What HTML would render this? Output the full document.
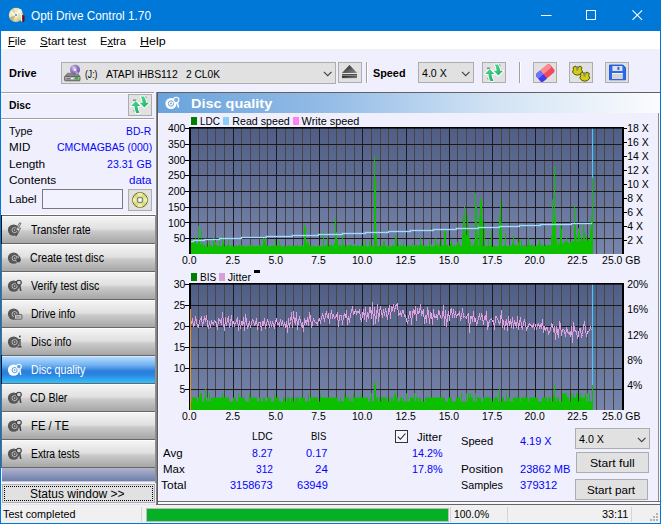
<!DOCTYPE html><html><head><meta charset="utf-8"><title>Opti Drive Control 1.70</title><style>
*{box-sizing:border-box;margin:0;padding:0}
html,body{width:661px;height:524px;overflow:hidden;background:#EFEFFE}
body{position:relative;font-family:"Liberation Sans",sans-serif;font-size:12px;color:#000}
.a{position:absolute;white-space:nowrap}
.t{position:absolute;white-space:pre;transform-origin:0 0}
.nav{position:absolute;left:2px;width:153px;height:27px;background:linear-gradient(#f4f4f4 0%,#e0e0e0 46%,#cbcbcb 54%,#a6a6a6 100%);border-top:1px solid #fcfcfc}
.nav.sel{background:linear-gradient(#b4daff 0%,#74b4f2 30%,#2c7edc 54%,#2a84e0 68%,#36c0fa 100%);border-top-color:#d4ecff}
.tb{position:absolute;background:#e1e1e1;border:1px solid #adadad}
u{text-decoration:underline}
</style></head><body>
<div class="a" style="left:0;top:0;width:661px;height:31px;background:#0078d7"></div>
<span class="t" style="left:30.5px;top:9.8px;font-size:12px;line-height:12px;transform:scaleX(0.983);color:#fff">Opti Drive Control 1.70</span>
<svg class="a" style="left:8px;top:6px" width="18" height="18" viewBox="0 0 18 18"><defs><radialGradient id="dg" cx=".35" cy=".35" r=".8"><stop offset="0" stop-color="#fbf6dc"/><stop offset=".6" stop-color="#e6dca8"/><stop offset="1" stop-color="#b4a468"/></radialGradient></defs><circle cx="8" cy="9" r="7.2" fill="url(#dg)"/><path d="M8 9L1.300 11.600A7.200 7.200 0 0 0 4.600 15.300Z" fill="#a89450" opacity=".55"/><path d="M8 9L10.500 2.300A7.200 7.200 0 0 1 14.300 5.500Z" fill="#fffbe8" opacity=".7"/><path d="M8 9L3 3.800A7.200 7.200 0 0 1 6 2.100Z" fill="#c8b878" opacity=".5"/><circle cx="8" cy="9" r="1.7" fill="#fff"/><circle cx="8" cy="9" r=".9" fill="#2a78d0"/><path d="M14.2 9v7h1.6l.7-1.5V9.5z" fill="#6e0e0e"/><path d="M12.6 3.2l1 12.3" stroke="#f4f4f4" stroke-width="1.3"/></svg>
<svg class="a" style="left:530px;top:0" width="131" height="31" viewBox="0 0 131 31"><path d="M11 15.5h10.5" stroke="#fff" stroke-width="1"/><rect x="56.5" y="10.5" width="9" height="9" fill="none" stroke="#fff"/><path d="M102.5 10.3l9.6 9.6M112.1 10.3l-9.6 9.6" stroke="#fff" stroke-width="1.1"/></svg>
<div class="a" style="left:1px;top:31px;width:659px;height:18px;background:#fff"></div>
<div class="a" style="left:1px;top:49px;width:659px;height:1px;background:#f2f2f2"></div>
<span class="t" style="left:8.1px;top:35.9px;font-size:11.4px;line-height:11.4px;transform:scaleX(0.986)"><u>F</u>ile</span>
<span class="t" style="left:39.9px;top:35.9px;font-size:11.4px;line-height:11.4px;transform:scaleX(1.013)"><u>S</u>tart test</span>
<span class="t" style="left:100.1px;top:35.9px;font-size:11.4px;line-height:11.4px;transform:scaleX(0.978)">E<u>x</u>tra</span>
<span class="t" style="left:139.8px;top:35.9px;font-size:11.4px;line-height:11.4px;transform:scaleX(1.097)"><u>H</u>elp</span>
<div class="a" style="left:0;top:31px;width:1px;height:493px;background:#0078d7"></div>
<div class="a" style="left:660px;top:31px;width:1px;height:493px;background:#0078d7"></div>
<div class="a" style="left:0;top:523px;width:661px;height:1px;background:#0078d7"></div>
<span class="t" style="left:8.7px;top:67.9px;font-size:11.4px;line-height:11.4px;transform:scaleX(0.965);font-weight:bold">Drive</span>
<div class="tb" style="left:61px;top:62px;width:275px;height:22px"></div>
<span class="t" style="left:84.5px;top:68.8px;font-size:11.4px;line-height:11.4px;transform:scaleX(0.754)">(J:)</span>
<span class="t" style="left:105.8px;top:68.8px;font-size:11.4px;line-height:11.4px;transform:scaleX(0.913)">ATAPI iHBS112</span>
<span class="t" style="left:185.7px;top:68.8px;font-size:11.4px;line-height:11.4px;transform:scaleX(0.895)">2 CL0K</span>
<svg class="a" style="left:322.5px;top:70.5px" width="10" height="7" viewBox="0 0 10 7"><path d="M0.9 0.8l3.8 3.9L8.5 0.8" fill="none" stroke="#404040" stroke-width="1.1"/></svg>
<svg class="a" style="left:63px;top:63px" width="19" height="20" viewBox="63 63 19 20"><defs><radialGradient id="pd" cx=".4" cy=".35" r=".7"><stop offset="0" stop-color="#d8ccf0"/><stop offset=".5" stop-color="#9478c4"/><stop offset="1" stop-color="#6c509c"/></radialGradient><linearGradient id="dv" x1="0" y1="0" x2="0" y2="1"><stop offset="0" stop-color="#c4c4c4"/><stop offset="1" stop-color="#8c8c8c"/></linearGradient></defs><path d="M64.6 76.6L67.5 73.2H77.5L80 76.6Z" fill="#8a8a8a" stroke="#5a5a5a" stroke-width=".6"/><circle cx="75" cy="69.8" r="5" fill="url(#pd)"/><path d="M75 69.8L71.2 66.6A5 5 0 0 1 74 64.9ZM75 69.8L78.8 73A5 5 0 0 1 76 74.7Z" fill="#c8b8e8" opacity=".7"/><circle cx="75" cy="69.8" r="1.3" fill="#f4f0fa"/><rect x="64.6" y="76.4" width="15.4" height="4.4" rx=".8" fill="url(#dv)" stroke="#4e4e4e" stroke-width=".8"/><rect x="70.8" y="78" width="2.6" height="1.2" fill="#fff"/><rect x="66.5" y="78" width="4" height="1.2" fill="#777"/><circle cx="76.6" cy="77.9" r="1.5" fill="#18c018"/></svg>
<div class="tb" style="left:338px;top:62px;width:24px;height:21px"></div>
<svg class="a" style="left:341px;top:64px" width="18" height="16" viewBox="341 64 18 16"><defs><linearGradient id="ej" x1="0" y1="0" x2="1" y2="1"><stop offset="0" stop-color="#1e1e1e"/><stop offset="1" stop-color="#8c8c8c"/></linearGradient></defs><path d="M349.5 65L357.200 73H341.900Z" fill="url(#ej)"/><rect x="342" y="74.200" width="15" height="1.300" fill="#2c2c2c"/><rect x="342" y="76" width="15" height="2.200" fill="url(#ej)"/></svg>
<div class="a" style="left:366px;top:62px;width:1px;height:21px;background:#a0a0a0"></div>
<div class="a" style="left:367px;top:62px;width:1px;height:21px;background:#fff"></div>
<span class="t" style="left:372.5px;top:67.9px;font-size:11.4px;line-height:11.4px;transform:scaleX(0.951);font-weight:bold">Speed</span>
<div class="tb" style="left:418px;top:62px;width:56px;height:21px"></div>
<span class="t" style="left:422.0px;top:67.9px;font-size:11.4px;line-height:11.4px;transform:scaleX(0.928)">4.0 X</span>
<svg class="a" style="left:460.5px;top:70.5px" width="10" height="7" viewBox="0 0 10 7"><path d="M0.9 0.8l3.8 3.9L8.5 0.8" fill="none" stroke="#404040" stroke-width="1.1"/></svg>
<div class="tb" style="left:482px;top:62px;width:24px;height:21px"></div>
<svg class="a" style="left:482px;top:62px" width="24" height="22" viewBox="0 0 24 22"><g transform="translate(12 10.800) scale(1.08) translate(-12 -10.800)"><g stroke="#fff" stroke-width="1.6" stroke-linejoin="round" fill="#fff"><path d="M8 7.2L12.3 12H9.6Q10 16 11.6 18.2L8.6 18.6Q6.8 15 6.8 12H3.7Z"/><path d="M16 13.4L11.7 9H14.5Q14.2 5.5 12.7 3.2L15.8 3Q17.5 6 17.6 9H20.4Z"/></g><defs><linearGradient id="ag" x1="0" y1="0" x2="1" y2="1"><stop offset="0" stop-color="#4cdc94"/><stop offset="1" stop-color="#1cac60"/></linearGradient></defs><path d="M8 7.2L12.3 12H9.6Q10 16 11.6 18.2L8.6 18.6Q6.8 15 6.8 12H3.7Z" fill="url(#ag)"/><path d="M16 13.4L11.7 9H14.5Q14.2 5.5 12.7 3.2L15.8 3Q17.5 6 17.6 9H20.4Z" fill="url(#ag)"/><path d="M5.5 6.5h3" stroke="#444" stroke-width=".8"/><path d="M17.3 3.2l.8 2M6 16l.8 1.6" stroke="#444" stroke-width=".7" stroke-dasharray="1 1"/></g></svg>
<div class="a" style="left:519px;top:62px;width:1px;height:21px;background:#a0a0a0"></div>
<div class="a" style="left:520px;top:62px;width:1px;height:21px;background:#fff"></div>
<div class="tb" style="left:533px;top:62px;width:24px;height:21px"></div>
<svg class="a" style="left:533px;top:62px" width="24" height="21" viewBox="533 62 24 21"><g transform="rotate(-40 545.3 73)"><rect x="536.3" y="67.8" width="18" height="10.4" rx="2.4" fill="#ec4c5c"/><rect x="536.3" y="67.8" width="18" height="5" rx="2.4" fill="#ff8a92"/><path d="M538.7 67.8h4.4v10.4h-4.4a2.400 2.400 0 0 1-2.400-2.400v-5.600a2.400 2.400 0 0 1 2.400-2.400z" fill="#3a3af0"/><path d="M538.7 67.8h4.4v5h-6.800v-2.600a2.400 2.400 0 0 1 2.400-2.400z" fill="#6a76ff"/></g></svg>
<div class="tb" style="left:569px;top:62px;width:24px;height:21px"></div>
<svg class="a" style="left:569px;top:62px" width="24" height="21" viewBox="569 62 24 21"><g stroke="#55540a" stroke-width="1"><path d="M573 67.5l2.5-1.5 1 1.8h2l1-1.8 2.5 1.5-.6 2.2 1.2 2.3-2.2 2.4-2.9.8-3-.8-2-2.4 1-2.3z" fill="#d2ce12"/><path d="M580.3 73.5l2.5-1.5 1 1.8h2l1-1.8 2.5 1.5-.6 2.2 1.2 2.3-2.2 2.4-2.9.8-3-.8-2-2.4 1-2.3z" fill="#d2ce12"/></g><rect x="576.2" y="66" width="2" height="4.6" fill="#8c8c74"/><rect x="583.5" y="72" width="2" height="4.6" fill="#8c8c74"/></svg>
<div class="tb" style="left:605px;top:62px;width:24px;height:21px"></div>
<svg class="a" style="left:605px;top:62px" width="24" height="21" viewBox="605 62 24 21"><path d="M609.5 65h13.4l2.6 2.4v12.4h-16z" fill="#2a6af0" stroke="#1a4cc8" stroke-width=".8"/><rect x="612.4" y="66" width="10" height="5" fill="#e2e2e6"/><rect x="617.4" y="66.8" width="2" height="3.2" fill="#2a6af0"/><rect x="612" y="73" width="10.8" height="6" fill="#d4d4d4"/><rect x="612" y="73" width="10.8" height="1" fill="#f4f4f4"/></svg>
<div class="a" style="left:1px;top:92px;width:153px;height:1px;background:#a0a0a0"></div>
<div class="a" style="left:1px;top:93px;width:153px;height:1px;background:#fff"></div>
<span class="t" style="left:8.7px;top:100.1px;font-size:11.4px;line-height:11.4px;transform:scaleX(0.906);font-weight:bold">Disc</span>
<div class="tb" style="left:128px;top:94px;width:24px;height:22px"></div>
<svg class="a" style="left:128px;top:94px" width="24" height="22" viewBox="0 0 24 22"><g transform="translate(12 10.800) scale(1.08) translate(-12 -10.800)"><g stroke="#fff" stroke-width="1.6" stroke-linejoin="round" fill="#fff"><path d="M8 7.2L12.3 12H9.6Q10 16 11.6 18.2L8.6 18.6Q6.8 15 6.8 12H3.7Z"/><path d="M16 13.4L11.7 9H14.5Q14.2 5.5 12.7 3.2L15.8 3Q17.5 6 17.6 9H20.4Z"/></g><defs><linearGradient id="ag2" x1="0" y1="0" x2="1" y2="1"><stop offset="0" stop-color="#4cdc94"/><stop offset="1" stop-color="#1cac60"/></linearGradient></defs><path d="M8 7.2L12.3 12H9.6Q10 16 11.6 18.2L8.6 18.6Q6.8 15 6.8 12H3.7Z" fill="url(#ag2)"/><path d="M16 13.4L11.7 9H14.5Q14.2 5.5 12.7 3.2L15.8 3Q17.5 6 17.6 9H20.4Z" fill="url(#ag2)"/><path d="M5.5 6.5h3" stroke="#444" stroke-width=".8"/><path d="M17.3 3.2l.8 2M6 16l.8 1.6" stroke="#444" stroke-width=".7" stroke-dasharray="1 1"/></g></svg>
<div class="a" style="left:1px;top:118px;width:153px;height:1px;background:#a0a0a0"></div>
<div class="a" style="left:1px;top:119px;width:153px;height:1px;background:#fff"></div>
<span class="t" style="left:8.7px;top:125.9px;font-size:11.4px;line-height:11.4px;transform:scaleX(0.951)">Type</span>
<span class="t" style="left:126.3px;top:125.9px;font-size:11.4px;line-height:11.4px;transform:scaleX(0.905);color:#0404f8">BD-R</span>
<span class="t" style="left:8.7px;top:142.1px;font-size:11.4px;line-height:11.4px;transform:scaleX(1.020)">MID</span>
<span class="t" style="left:56.9px;top:142.1px;font-size:11.4px;line-height:11.4px;transform:scaleX(0.922);color:#0404f8">CMCMAGBA5 (000)</span>
<span class="t" style="left:8.7px;top:158.9px;font-size:11.4px;line-height:11.4px;transform:scaleX(1.039)">Length</span>
<span class="t" style="left:106.8px;top:158.9px;font-size:11.4px;line-height:11.4px;transform:scaleX(0.929);color:#0404f8">23.31 GB</span>
<span class="t" style="left:8.7px;top:175.1px;font-size:11.4px;line-height:11.4px;transform:scaleX(1.035)">Contents</span>
<span class="t" style="left:128.5px;top:175.1px;font-size:11.4px;line-height:11.4px;transform:scaleX(1.015);color:#0404f8">data</span>
<span class="t" style="left:8.7px;top:193.9px;font-size:11.4px;line-height:11.4px;transform:scaleX(0.987)">Label</span>
<div class="a" style="left:42px;top:189px;width:81px;height:20px;background:#f2f2ff;border:1px solid #7a7a7a"></div>
<div class="tb" style="left:128px;top:189px;width:24px;height:22px"></div>
<svg class="a" style="left:131px;top:191px" width="18" height="18" viewBox="-9 -9 18 18"><circle r="7.5" fill="#dede78" stroke="#56561e" stroke-width=".9"/><g fill="#f6f6c0" opacity=".75"><path d="M0 0L-2.600 -7A7.500 7.500 0 0 1 2.600 -7Z"/><path d="M0 0L2.600 7A7.500 7.500 0 0 1 -2.600 7Z"/><path d="M0 0L-7 2.600A7.500 7.500 0 0 1 -7 -2.600Z"/><path d="M0 0L7 -2.600A7.500 7.500 0 0 1 7 2.600Z"/></g><circle r="2.900" fill="#d6e4c6" stroke="#5c6474" stroke-width=".9"/><circle r="1.200" fill="#fff"/></svg>
<div class="a" style="left:1px;top:214px;width:155px;height:1px;background:#fff"></div>
<div class="a" style="left:1px;top:215px;width:155px;height:253px;background:#686868"></div>
<div class="nav" style="top:216px">
<svg style="position:absolute;left:0;top:-1px" width="28" height="28" viewBox="2 0 28 28"><circle cx="13.6" cy="14.1" r="5.7" fill="#585858"/><circle cx="14.6" cy="14.1" r="2.6" fill="none" stroke="#c4c4c4" stroke-width=".9"/><circle cx="14.6" cy="14.1" r=".8" fill="#c4c4c4"/><path d="M19.4 7l-3.6 7.2h2.2l-2 6 4.6-8h-2.2l2.6-5.2z" fill="#e8e8e8" stroke="#444" stroke-width=".7"/></svg>
</div>
<span class="t" style="left:31.1px;top:223.8px;font-size:12px;line-height:12px;transform:scaleX(0.875)">Transfer rate</span>
<div class="nav" style="top:244px">
<svg style="position:absolute;left:0;top:-1px" width="28" height="28" viewBox="2 0 28 28"><circle cx="13.6" cy="14.1" r="5.7" fill="#585858"/><circle cx="14.6" cy="14.1" r="2.6" fill="none" stroke="#c4c4c4" stroke-width=".9"/><circle cx="14.6" cy="14.1" r=".8" fill="#c4c4c4"/><path d="M18.5 10.5c2 2.5 2.6 4 2.6 5.5a2.7 2.7 0 0 1-5.4 0c0-1.5 1.2-2 1.6-3.4.6.6.8 1.2.8 1.8.6-1.2.8-2.4.4-3.900z" fill="#4a4a4a" stroke="#ddd" stroke-width=".5"/></svg>
</div>
<span class="t" style="left:30.0px;top:251.8px;font-size:12px;line-height:12px;transform:scaleX(0.888)">Create test disc</span>
<div class="nav" style="top:272px">
<svg style="position:absolute;left:0;top:-1px" width="28" height="28" viewBox="2 0 28 28"><circle cx="13.6" cy="14.1" r="5.7" fill="#585858"/><circle cx="14.6" cy="14.1" r="2.6" fill="none" stroke="#c4c4c4" stroke-width=".9"/><circle cx="14.6" cy="14.1" r=".8" fill="#c4c4c4"/><circle cx="18.9" cy="10.6" r="2.4" fill="#d4d4d4" stroke="#3e3e3e" stroke-width="1.1"/><path d="M19.7 13.2l1 5.6" stroke="#3e3e3e" stroke-width="1.5"/></svg>
</div>
<span class="t" style="left:30.5px;top:279.8px;font-size:12px;line-height:12px;transform:scaleX(0.883)">Verify test disc</span>
<div class="nav" style="top:300px">
<svg style="position:absolute;left:0;top:-1px" width="28" height="28" viewBox="2 0 28 28"><circle cx="13.6" cy="14.1" r="5.7" fill="#585858"/><circle cx="14.6" cy="14.1" r="2.6" fill="none" stroke="#c4c4c4" stroke-width=".9"/><circle cx="14.6" cy="14.1" r=".8" fill="#c4c4c4"/><rect x="14.5" y="14.6" width="7.4" height="4.6" rx=".8" fill="#c8c8c8" stroke="#4a4a4a" stroke-width=".8"/><path d="M16 17h4" stroke="#666" stroke-width=".8"/></svg>
</div>
<span class="t" style="left:30.9px;top:307.8px;font-size:12px;line-height:12px;transform:scaleX(0.876)">Drive info</span>
<div class="nav" style="top:328px">
<svg style="position:absolute;left:0;top:-1px" width="28" height="28" viewBox="2 0 28 28"><circle cx="13.6" cy="14.1" r="5.7" fill="#585858"/><circle cx="14.6" cy="14.1" r="2.6" fill="none" stroke="#c4c4c4" stroke-width=".9"/><circle cx="14.6" cy="14.1" r=".8" fill="#c4c4c4"/><path d="M18.2 11.6h1.8v7M17.6 18.8h4" stroke="#444" stroke-width="1.3" fill="none"/><rect x="19" y="7.6" width="1.6" height="1.8" fill="#444"/></svg>
</div>
<span class="t" style="left:30.9px;top:335.8px;font-size:12px;line-height:12px;transform:scaleX(0.878)">Disc info</span>
<div class="nav sel" style="top:356px">
<svg style="position:absolute;left:0;top:-1px" width="28" height="28" viewBox="2 0 28 28"><circle cx="13.6" cy="14.1" r="5.7" fill="#fff"/><circle cx="14.6" cy="14.1" r="2.6" fill="none" stroke="#3c8ce4" stroke-width=".9"/><circle cx="14.6" cy="14.1" r=".8" fill="#3c8ce4"/><circle cx="18.9" cy="10.6" r="2.4" fill="#5aa4ec" stroke="#fff" stroke-width="1.1"/><path d="M19.7 13.2l1 5.6" stroke="#fff" stroke-width="1.5"/></svg>
</div>
<span class="t" style="left:30.8px;top:363.8px;font-size:12px;line-height:12px;transform:scaleX(0.885);color:#fff">Disc quality</span>
<div class="nav" style="top:384px">
<svg style="position:absolute;left:0;top:-1px" width="28" height="28" viewBox="2 0 28 28"><circle cx="13.6" cy="14.1" r="5.7" fill="#585858"/><circle cx="14.6" cy="14.1" r="2.6" fill="none" stroke="#c4c4c4" stroke-width=".9"/><circle cx="14.6" cy="14.1" r=".8" fill="#c4c4c4"/><circle cx="18.9" cy="10.6" r="2.4" fill="#d4d4d4" stroke="#3e3e3e" stroke-width="1.1"/><path d="M19.7 13.2l1 5.6" stroke="#3e3e3e" stroke-width="1.5"/></svg>
</div>
<span class="t" style="left:29.9px;top:391.8px;font-size:12px;line-height:12px;transform:scaleX(0.890)">CD Bler</span>
<div class="nav" style="top:412px">
<svg style="position:absolute;left:0;top:-1px" width="28" height="28" viewBox="2 0 28 28"><circle cx="13.6" cy="14.1" r="5.7" fill="#585858"/><circle cx="14.6" cy="14.1" r="2.6" fill="none" stroke="#c4c4c4" stroke-width=".9"/><circle cx="14.6" cy="14.1" r=".8" fill="#c4c4c4"/><circle cx="18.9" cy="10.6" r="2.4" fill="#d4d4d4" stroke="#3e3e3e" stroke-width="1.1"/><path d="M19.7 13.2l1 5.6" stroke="#3e3e3e" stroke-width="1.5"/></svg>
</div>
<span class="t" style="left:30.8px;top:419.8px;font-size:12px;line-height:12px;transform:scaleX(0.939)">FE / TE</span>
<div class="nav" style="top:440px">
<svg style="position:absolute;left:0;top:-1px" width="28" height="28" viewBox="2 0 28 28"><circle cx="13.6" cy="14.1" r="5.7" fill="#585858"/><circle cx="14.6" cy="14.1" r="2.6" fill="none" stroke="#c4c4c4" stroke-width=".9"/><circle cx="14.6" cy="14.1" r=".8" fill="#c4c4c4"/><circle cx="18.9" cy="10.6" r="2.4" fill="#d4d4d4" stroke="#3e3e3e" stroke-width="1.1"/><path d="M19.7 13.2l1 5.6" stroke="#3e3e3e" stroke-width="1.5"/></svg>
</div>
<span class="t" style="left:30.8px;top:447.8px;font-size:12px;line-height:12px;transform:scaleX(0.859)">Extra tests</span>
<div class="a" style="left:1px;top:215px;width:1px;height:29px;background:#111"></div>
<div class="a" style="left:1px;top:355px;width:1px;height:29px;background:#111"></div>
<div class="a" style="left:2px;top:468px;width:153px;height:13px;background:linear-gradient(#b0b4cc,#6e7eae)"></div>
<div class="a" style="left:2px;top:481px;width:153px;height:1px;background:#c8c8d2"></div>
<div class="a" style="left:155px;top:215px;width:1px;height:268px;background:#909090"></div>
<div class="a" style="left:2px;top:484px;width:153px;height:19px;background:#e1e1e1;border:1px solid #adadad"></div>
<div class="a" style="left:4px;top:486px;width:149px;height:15px;border:1px dotted #000"></div>
<span class="t" style="left:30.0px;top:487.8px;font-size:12px;line-height:12px;transform:scaleX(0.998)">Status window &gt;&gt;</span>
<div class="a" style="left:1px;top:504px;width:155px;height:1px;background:#e4e4e8"></div>
<div class="a" style="left:1px;top:505px;width:659px;height:18px;background:#f0f0f0"></div>
<span class="t" style="left:3.3px;top:509.0px;font-size:11.2px;line-height:11.2px;transform:scaleX(0.962)">Test completed</span>
<div class="a" style="left:141px;top:507px;width:1px;height:15px;background:#d4d4d4"></div>
<div class="a" style="left:146px;top:508px;width:303px;height:14px;background:#e6e6e6;border:1px solid #bcbcbc"></div>
<div class="a" style="left:147px;top:509px;width:301px;height:12px;background:#06b025"></div>
<div class="a" style="left:450px;top:507px;width:1px;height:15px;background:#d4d4d4"></div>
<span class="t" style="left:454.1px;top:509.0px;font-size:11.2px;line-height:11.2px;transform:scaleX(0.925)">100.0%</span>
<div class="a" style="left:507px;top:507px;width:1px;height:15px;background:#d4d4d4"></div>
<span class="t" style="left:601.9px;top:509.0px;font-size:11.2px;line-height:11.2px;transform:scaleX(0.972)">33:11</span>
<div class="a" style="left:631px;top:507px;width:1px;height:15px;background:#d4d4d4"></div>
<svg class="a" style="left:650px;top:513px" width="8" height="8" viewBox="0 0 8 8" fill="#b4b4b4"><rect x="6" y="0" width="2" height="2"/><rect x="3" y="3" width="2" height="2"/><rect x="6" y="3" width="2" height="2"/><rect x="0" y="6" width="2" height="2"/><rect x="3" y="6" width="2" height="2"/><rect x="6" y="6" width="2" height="2"/></svg>
<div class="a" style="left:156px;top:92px;width:504px;height:1px;background:#626262"></div>
<div class="a" style="left:156px;top:92px;width:1px;height:413px;background:#848484"></div>
<div class="a" style="left:157px;top:92px;width:1px;height:413px;background:#5c5c5c"></div>
<div class="a" style="left:158px;top:93px;width:501px;height:20px;background:linear-gradient(90deg,#69a3dc 0%,#94bce6 34%,#d0e2f4 66%,#fbfcfe 100%)"></div>
<div class="a" style="left:659px;top:93px;width:1px;height:411px;background:#f8f8ff"></div>
<div class="a" style="left:658px;top:113px;width:1px;height:389px;background:#8c8c8c"></div>
<svg class="a" style="left:162px;top:93px" width="24" height="20" viewBox="0 0 24 20"><circle cx="9" cy="10.5" r="5.6" fill="#fff"/><circle cx="9" cy="10.5" r="2.7" fill="none" stroke="#6aa2da" stroke-width="1"/><circle cx="9" cy="10.5" r=".9" fill="#6aa2da"/><circle cx="14.2" cy="7" r="2.7" fill="#7eb0e2" stroke="#fff" stroke-width="1.1"/><path d="M15.3 9.6l1.2 5" stroke="#fff" stroke-width="1.5"/></svg>
<div class="a" style="left:158px;top:501px;width:502px;height:1px;background:#6e6e6e"></div>
<div class="a" style="left:158px;top:502px;width:502px;height:2px;background:#f8f8ff"></div>
<div class="a" style="left:158px;top:113px;width:1px;height:388px;background:#f8f8ff"></div>
<div class="a" style="left:156px;top:504px;width:504px;height:1px;background:#666"></div>
<svg class="a" style="left:0;top:0" width="661" height="524" viewBox="0 0 661 524" font-family="Liberation Sans, sans-serif" font-size="11">
<defs><linearGradient id="pg" x1="0" y1="0" x2="0" y2="1"><stop offset="0" stop-color="#505e86"/><stop offset="1" stop-color="#7886ae"/></linearGradient></defs>
<rect x="190" y="128" width="433" height="126" fill="url(#pg)"/>
<rect x="198" y="128" width="1" height="126" fill="#484644"/>
<rect x="207" y="128" width="1" height="126" fill="#484644"/>
<rect x="215" y="128" width="1" height="126" fill="#484644"/>
<rect x="224" y="128" width="1" height="126" fill="#484644"/>
<rect x="233" y="128" width="1" height="126" fill="#1c1c1c"/>
<rect x="241" y="128" width="1" height="126" fill="#484644"/>
<rect x="250" y="128" width="1" height="126" fill="#484644"/>
<rect x="259" y="128" width="1" height="126" fill="#484644"/>
<rect x="267" y="128" width="1" height="126" fill="#484644"/>
<rect x="276" y="128" width="1" height="126" fill="#1c1c1c"/>
<rect x="285" y="128" width="1" height="126" fill="#484644"/>
<rect x="293" y="128" width="1" height="126" fill="#484644"/>
<rect x="302" y="128" width="1" height="126" fill="#484644"/>
<rect x="310" y="128" width="1" height="126" fill="#484644"/>
<rect x="319" y="128" width="1" height="126" fill="#1c1c1c"/>
<rect x="328" y="128" width="1" height="126" fill="#484644"/>
<rect x="336" y="128" width="1" height="126" fill="#484644"/>
<rect x="345" y="128" width="1" height="126" fill="#484644"/>
<rect x="354" y="128" width="1" height="126" fill="#484644"/>
<rect x="362" y="128" width="1" height="126" fill="#1c1c1c"/>
<rect x="371" y="128" width="1" height="126" fill="#484644"/>
<rect x="380" y="128" width="1" height="126" fill="#484644"/>
<rect x="388" y="128" width="1" height="126" fill="#484644"/>
<rect x="397" y="128" width="1" height="126" fill="#484644"/>
<rect x="406" y="128" width="1" height="126" fill="#1c1c1c"/>
<rect x="414" y="128" width="1" height="126" fill="#484644"/>
<rect x="423" y="128" width="1" height="126" fill="#484644"/>
<rect x="431" y="128" width="1" height="126" fill="#484644"/>
<rect x="440" y="128" width="1" height="126" fill="#484644"/>
<rect x="449" y="128" width="1" height="126" fill="#1c1c1c"/>
<rect x="457" y="128" width="1" height="126" fill="#484644"/>
<rect x="466" y="128" width="1" height="126" fill="#484644"/>
<rect x="475" y="128" width="1" height="126" fill="#484644"/>
<rect x="483" y="128" width="1" height="126" fill="#484644"/>
<rect x="492" y="128" width="1" height="126" fill="#1c1c1c"/>
<rect x="501" y="128" width="1" height="126" fill="#484644"/>
<rect x="509" y="128" width="1" height="126" fill="#484644"/>
<rect x="518" y="128" width="1" height="126" fill="#484644"/>
<rect x="526" y="128" width="1" height="126" fill="#484644"/>
<rect x="535" y="128" width="1" height="126" fill="#1c1c1c"/>
<rect x="544" y="128" width="1" height="126" fill="#484644"/>
<rect x="552" y="128" width="1" height="126" fill="#484644"/>
<rect x="561" y="128" width="1" height="126" fill="#484644"/>
<rect x="570" y="128" width="1" height="126" fill="#484644"/>
<rect x="578" y="128" width="1" height="126" fill="#1c1c1c"/>
<rect x="587" y="128" width="1" height="126" fill="#484644"/>
<rect x="596" y="128" width="1" height="126" fill="#484644"/>
<rect x="604" y="128" width="1" height="126" fill="#484644"/>
<rect x="613" y="128" width="1" height="126" fill="#484644"/>
<rect x="190" y="144" width="432" height="1" fill="#1a1a1a"/>
<rect x="190" y="160" width="432" height="1" fill="#1a1a1a"/>
<rect x="190" y="175" width="432" height="1" fill="#1a1a1a"/>
<rect x="190" y="191" width="432" height="1" fill="#1a1a1a"/>
<rect x="190" y="207" width="432" height="1" fill="#1a1a1a"/>
<rect x="190" y="222" width="432" height="1" fill="#1a1a1a"/>
<rect x="190" y="238" width="432" height="1" fill="#1a1a1a"/>
<path d="M190 254V241.3h1V242.5h1V241.7h1V243.4h1V240.2h1V236.9h1V244.1h2V226h1V239.8h1V244.5h1V230.4h1V243.7h1V245.2h1V244.6h1V246.5h1V243.1h1V246.9h1V246.4h1V240.7h1V245h1V245.5h1V246.7h1V236.7h1V243.7h1V241.8h1V244.3h1V245.9h1V246.7h1V237h1V246.6h1V246.1h1V236h1V242.2h1V246.6h1V245.9h1V246h1V244.6h1V238.9h1V245.5h1V246.7h1V244.9h1V246.3h1V246.5h1V245.9h1V246.1h1V245.3h1V246.6h1V245.4h1V244.8h1V246.1h1V245.1h1V244.6h1V246.1h1V246.5h1V246.6h1V246.5h1V245.9h1V246.6h1V244.5h1V244.7h1V246h1V244.2h1V246.4h1V246.1h1V246.5h1V246h2V245.8h1V245.1h1V244.3h1V246.5h1V245.2h1V238.2h1V241.2h1V237h1V245.3h1V245.7h1V245.9h1V246.2h1V246h1V245.9h1V245.4h1V246.1h1V246.4h1V239.8h1V245.5h2V245.7h1V241h1V245.3h1V246.5h1V246.3h1V245.5h1V246.7h1V246.6h2V246.1h1V244.6h1V245.9h1V246.4h1V245.6h1V246h2V245.9h1V245.8h1V246.1h1V244.1h1V245.9h1V246.5h1V245.8h2V245.3h1V246.6h1V225.3h1V227.2h1V243.5h1V240.8h1V242.3h1V246.1h1V245.7h1V245.6h1V246.5h1V246.1h1V245.5h1V246.7h1V246.6h1V245.7h1V245.4h1V245.5h1V246.4h1V246.5h1V245.9h1V231.6h1V245.7h1V245.8h1V245.6h1V238.2h1V246.4h1V244.8h1V246.2h1V244.5h1V244.9h1V246.3h1V243.1h1V217.8h1V231.9h1V239.9h1V246.3h1V244.8h1V245h1V246.6h1V235.1h1V244.8h1V245.9h1V246.6h1V244.7h1V246.5h1V245.2h1V245.3h1V245h1V244.4h1V246.3h1V245.5h1V243.9h1V246.2h1V246.3h1V245.4h1V245.5h1V246.2h1V246h1V243.3h1V245.8h1V244.6h1V246.2h1V239.9h1V246h1V246.7h1V246.3h1V240.8h1V245.8h2V245.6h1V246.5h1V155.7h1V180h1V235.1h1V245.7h1V246.3h1V246.1h1V246h1V246.2h1V246h1V241.2h1V240.9h1V245.9h1V246.6h1V246.2h1V246h1V246.7h1V246.2h1V246.6h1V245.1h1V246h1V245.4h1V235.1h1V238.2h1V246.2h1V243.8h1V246.6h1V244.9h1V246.3h1V245.6h1V241.8h1V246.4h1V246.2h2V246.3h1V244.4h1V246.5h1V245.8h1V245.6h1V243.6h1V246.7h1V245.2h1V245.8h1V244.8h1V245.4h1V246.6h1V244.9h1V236.7h1V243.9h1V245.8h1V245.6h1V246.3h1V245.9h1V245.7h1V246.5h1V246.2h1V240.7h1V246.7h1V244.6h1V246.4h2V245.5h1V238.2h1V245.2h1V242.6h1V246.7h1V243.2h1V246.1h1V239.1h1V245.6h1V246.1h1V229.4h1V230.4h1V244.9h1V244.8h1V246.7h1V245.7h1V243.6h1V239.5h1V245.6h1V246.2h1V244.2h1V246.4h1V244.7h1V242.2h1V242.4h1V243.5h1V246.2h1V245.7h1V235.1h1V216.2h1V206.8h1V231.9h1V235.1h1V214.6h1V225.7h1V238.2h1V241.4h1V246h1V244.4h1V245.6h1V241.6h1V193.2h1V205.2h1V235.1h1V246h1V216.2h1V197.6h1V200.4h1V219.3h1V246h1V225.7h1V245.8h1V246.1h1V245.5h1V239.7h1V245.7h1V245.6h1V230.7h1V246.7h1V246.3h1V245.9h1V246.3h1V246.6h1V246.2h1V246.4h1V216.2h1V201.1h1V222.5h1V246.4h1V245.9h1V244.6h1V232.9h1V246.1h1V246h1V246.3h1V245.4h1V246h1V245.5h1V242.5h1V235.7h1V244.1h1V245.6h1V245.5h1V245.6h1V242.2h1V239.2h1V246.2h1V239.8h1V244.8h1V246.4h1V245h1V246.3h2V244.8h1V238.2h1V245h1V245.3h1V244.4h1V244.7h1V246.1h1V245.8h1V246h1V245.8h2V243.3h1V238.9h1V242.9h1V245.5h1V244.6h1V245.9h2V244.3h1V245.7h1V245.1h1V245.3h1V244.4h1V245.4h1V235.1h1V199.5h1V225.7h1V166.1h1V216.2h1V238.2h1V244.5h1V240.9h1V243.8h1V224.1h1V228.8h1V243.7h1V243.2h1V241.6h1V241.1h1V236.9h1V242h1V243.2h1V242.9h1V242.1h1V242.3h1V241.1h1V241.7h1V206.1h1V225.7h1V235.4h1V242h1V228.2h1V231.9h1V241.8h1V238.1h1V239h1V225h1V231.9h1V241.3h1V236h1V240.7h1V240.6h1V239.5h1V228.8h1V216.2h1V177.8h1V254Z" fill="#0cc000"/>
<path d="M191 241.5H193V240.5H204V239.5H219V238.5H241V237.5H266V236.5H292V235.5H318V234.5H342V233.5H365V232.5H388V231.5H410V230.5H433V229.5H456V228.5H478V227.5H499V226.5H519V225.5H540V224.5H571V223.5H592" fill="none" stroke="#a0dcff" stroke-width="1" shape-rendering="crispEdges"/>
<path d="M191 241.5H193V240.5H204V239.5H219V238.5H241V237.5H266V236.5H292V235.5H318V234.5H342V233.5H365V232.5H388V231.5H410V230.5H433V229.5H456V228.5H478V227.5H499V226.5H519V225.5H540V224.5H571V223.5H592" fill="none" stroke="#a0dcff" stroke-width="1.8" opacity=".35"/>
<rect x="592" y="128" width="1.1" height="50" fill="#40ccf4"/>
<rect x="189" y="127" width="2" height="127" fill="#000"/>
<rect x="189" y="127" width="434" height="1.6" fill="#000"/>
<rect x="622" y="127" width="2" height="127" fill="#000"/>
<text x="185.3" y="132.2" text-anchor="end" textLength="17.4" lengthAdjust="spacingAndGlyphs">400</text>
<rect x="185" y="128" width="5" height="1" fill="#000"/>
<text x="185.3" y="147.9" text-anchor="end" textLength="17.4" lengthAdjust="spacingAndGlyphs">350</text>
<rect x="185" y="144" width="5" height="1" fill="#000"/>
<text x="185.3" y="163.7" text-anchor="end" textLength="17.4" lengthAdjust="spacingAndGlyphs">300</text>
<rect x="185" y="160" width="5" height="1" fill="#000"/>
<text x="185.3" y="179.4" text-anchor="end" textLength="17.4" lengthAdjust="spacingAndGlyphs">250</text>
<rect x="185" y="175" width="5" height="1" fill="#000"/>
<text x="185.3" y="195.2" text-anchor="end" textLength="17.4" lengthAdjust="spacingAndGlyphs">200</text>
<rect x="185" y="191" width="5" height="1" fill="#000"/>
<text x="185.3" y="210.9" text-anchor="end" textLength="17.4" lengthAdjust="spacingAndGlyphs">150</text>
<rect x="185" y="207" width="5" height="1" fill="#000"/>
<text x="185.3" y="226.7" text-anchor="end" textLength="17.4" lengthAdjust="spacingAndGlyphs">100</text>
<rect x="185" y="222" width="5" height="1" fill="#000"/>
<text x="185.3" y="242.4" text-anchor="end" textLength="11.6" lengthAdjust="spacingAndGlyphs">50</text>
<rect x="185" y="238" width="5" height="1" fill="#000"/>
<text x="627.2" y="132.2" textLength="21.5" lengthAdjust="spacingAndGlyphs">18 X</text>
<rect x="624" y="128" width="3" height="1" fill="#000"/>
<text x="627.2" y="146.2" textLength="21.5" lengthAdjust="spacingAndGlyphs">16 X</text>
<rect x="624" y="142" width="3" height="1" fill="#000"/>
<text x="627.2" y="160.2" textLength="21.5" lengthAdjust="spacingAndGlyphs">14 X</text>
<rect x="624" y="156" width="3" height="1" fill="#000"/>
<text x="627.2" y="174.2" textLength="21.5" lengthAdjust="spacingAndGlyphs">12 X</text>
<rect x="624" y="170" width="3" height="1" fill="#000"/>
<text x="627.2" y="188.2" textLength="21.5" lengthAdjust="spacingAndGlyphs">10 X</text>
<rect x="624" y="184" width="3" height="1" fill="#000"/>
<text x="627.2" y="202.2" textLength="15.7" lengthAdjust="spacingAndGlyphs">8 X</text>
<rect x="624" y="198" width="3" height="1" fill="#000"/>
<text x="627.2" y="216.2" textLength="15.7" lengthAdjust="spacingAndGlyphs">6 X</text>
<rect x="624" y="212" width="3" height="1" fill="#000"/>
<text x="627.2" y="230.2" textLength="15.7" lengthAdjust="spacingAndGlyphs">4 X</text>
<rect x="624" y="226" width="3" height="1" fill="#000"/>
<text x="627.2" y="244.2" textLength="15.7" lengthAdjust="spacingAndGlyphs">2 X</text>
<rect x="624" y="240" width="3" height="1" fill="#000"/>
<text x="189.3" y="264.2" text-anchor="middle" textLength="14.5" lengthAdjust="spacingAndGlyphs">0.0</text>
<text x="232.7" y="264.2" text-anchor="middle" textLength="14.5" lengthAdjust="spacingAndGlyphs">2.5</text>
<text x="275.7" y="264.2" text-anchor="middle" textLength="14.5" lengthAdjust="spacingAndGlyphs">5.0</text>
<text x="318.5" y="264.2" text-anchor="middle" textLength="14.5" lengthAdjust="spacingAndGlyphs">7.5</text>
<text x="362.1" y="264.2" text-anchor="middle" textLength="20.3" lengthAdjust="spacingAndGlyphs">10.0</text>
<text x="405.7" y="264.2" text-anchor="middle" textLength="20.3" lengthAdjust="spacingAndGlyphs">12.5</text>
<text x="448.9" y="264.2" text-anchor="middle" textLength="20.3" lengthAdjust="spacingAndGlyphs">15.0</text>
<text x="492.1" y="264.2" text-anchor="middle" textLength="20.3" lengthAdjust="spacingAndGlyphs">17.5</text>
<text x="534.6" y="264.2" text-anchor="middle" textLength="20.3" lengthAdjust="spacingAndGlyphs">20.0</text>
<text x="577.4" y="264.2" text-anchor="middle" textLength="20.3" lengthAdjust="spacingAndGlyphs">22.5</text>
<text x="602.1" y="264.2" textLength="38.3" lengthAdjust="spacingAndGlyphs">25.0 GB</text>
<rect x="191" y="117" width="6" height="8" fill="#008000"/><text x="200" y="124.7" textLength="20" lengthAdjust="spacingAndGlyphs">LDC</text>
<rect x="223" y="117" width="6" height="8" fill="#87cefa"/><text x="232.3" y="124.7" textLength="57.5" lengthAdjust="spacingAndGlyphs">Read speed</text>
<rect x="293" y="117" width="6" height="8" fill="#ff80f0"/><text x="301.6" y="124.7" textLength="57.8" lengthAdjust="spacingAndGlyphs">Write speed</text>
<rect x="190" y="284" width="433" height="126" fill="url(#pg)"/>
<rect x="198" y="284" width="1" height="126" fill="#484644"/>
<rect x="207" y="284" width="1" height="126" fill="#484644"/>
<rect x="215" y="284" width="1" height="126" fill="#484644"/>
<rect x="224" y="284" width="1" height="126" fill="#484644"/>
<rect x="233" y="284" width="1" height="126" fill="#1c1c1c"/>
<rect x="241" y="284" width="1" height="126" fill="#484644"/>
<rect x="250" y="284" width="1" height="126" fill="#484644"/>
<rect x="259" y="284" width="1" height="126" fill="#484644"/>
<rect x="267" y="284" width="1" height="126" fill="#484644"/>
<rect x="276" y="284" width="1" height="126" fill="#1c1c1c"/>
<rect x="285" y="284" width="1" height="126" fill="#484644"/>
<rect x="293" y="284" width="1" height="126" fill="#484644"/>
<rect x="302" y="284" width="1" height="126" fill="#484644"/>
<rect x="310" y="284" width="1" height="126" fill="#484644"/>
<rect x="319" y="284" width="1" height="126" fill="#1c1c1c"/>
<rect x="328" y="284" width="1" height="126" fill="#484644"/>
<rect x="336" y="284" width="1" height="126" fill="#484644"/>
<rect x="345" y="284" width="1" height="126" fill="#484644"/>
<rect x="354" y="284" width="1" height="126" fill="#484644"/>
<rect x="362" y="284" width="1" height="126" fill="#1c1c1c"/>
<rect x="371" y="284" width="1" height="126" fill="#484644"/>
<rect x="380" y="284" width="1" height="126" fill="#484644"/>
<rect x="388" y="284" width="1" height="126" fill="#484644"/>
<rect x="397" y="284" width="1" height="126" fill="#484644"/>
<rect x="406" y="284" width="1" height="126" fill="#1c1c1c"/>
<rect x="414" y="284" width="1" height="126" fill="#484644"/>
<rect x="423" y="284" width="1" height="126" fill="#484644"/>
<rect x="431" y="284" width="1" height="126" fill="#484644"/>
<rect x="440" y="284" width="1" height="126" fill="#484644"/>
<rect x="449" y="284" width="1" height="126" fill="#1c1c1c"/>
<rect x="457" y="284" width="1" height="126" fill="#484644"/>
<rect x="466" y="284" width="1" height="126" fill="#484644"/>
<rect x="475" y="284" width="1" height="126" fill="#484644"/>
<rect x="483" y="284" width="1" height="126" fill="#484644"/>
<rect x="492" y="284" width="1" height="126" fill="#1c1c1c"/>
<rect x="501" y="284" width="1" height="126" fill="#484644"/>
<rect x="509" y="284" width="1" height="126" fill="#484644"/>
<rect x="518" y="284" width="1" height="126" fill="#484644"/>
<rect x="526" y="284" width="1" height="126" fill="#484644"/>
<rect x="535" y="284" width="1" height="126" fill="#1c1c1c"/>
<rect x="544" y="284" width="1" height="126" fill="#484644"/>
<rect x="552" y="284" width="1" height="126" fill="#484644"/>
<rect x="561" y="284" width="1" height="126" fill="#484644"/>
<rect x="570" y="284" width="1" height="126" fill="#484644"/>
<rect x="578" y="284" width="1" height="126" fill="#1c1c1c"/>
<rect x="587" y="284" width="1" height="126" fill="#484644"/>
<rect x="596" y="284" width="1" height="126" fill="#484644"/>
<rect x="604" y="284" width="1" height="126" fill="#484644"/>
<rect x="613" y="284" width="1" height="126" fill="#484644"/>
<rect x="190" y="305" width="432" height="1" fill="#1a1a1a"/>
<rect x="190" y="326" width="432" height="1" fill="#1a1a1a"/>
<rect x="190" y="347" width="432" height="1" fill="#1a1a1a"/>
<rect x="190" y="368" width="432" height="1" fill="#1a1a1a"/>
<rect x="190" y="389" width="432" height="1" fill="#1a1a1a"/>
<path d="M190 410V393.2h1V401.6h1V397.4h5V401.6h1V397.4h2V393.2h2V401.6h2V397.4h1V389h1V401.6h1V397.4h1V401.6h1V393.2h1V401.6h1V397.4h11V393.2h1V397.4h6V401.6h4V397.4h3V401.6h2V393.2h1V397.4h6V401.6h4V393.2h1V397.4h7V401.6h2V397.4h2V401.6h2V397.4h2V401.6h2V397.4h4V401.6h3V393.2h1V397.4h4V401.6h4V397.4h2V401.6h2V397.4h3V401.6h1V397.4h2V401.6h2V397.4h4V401.6h1V397.4h5V401.6h3V393.2h1V401.6h1V397.4h8V401.6h2V393.2h1V397.4h17V401.6h2V397.4h1V401.6h3V393.2h1V397.4h4V401.6h1V397.4h1V401.6h2V393.2h1V397.4h6V393.2h1V397.4h7V401.6h2V397.4h1V393.2h1V401.6h2V380.6h1V384.8h1V397.4h2V401.6h1V397.4h1V401.6h1V397.4h6V401.6h2V397.4h1V401.6h1V397.4h2V401.6h1V393.2h2V397.4h2V401.6h2V397.4h2V401.6h1V397.4h1V401.6h2V393.2h1V401.6h3V397.4h4V393.2h1V401.6h1V397.4h2V401.6h1V397.4h2V401.6h4V397.4h20V401.6h3V397.4h4V401.6h4V397.4h4V401.6h1V393.2h1V401.6h4V393.2h1V401.6h1V393.2h1V397.4h1V393.2h1V397.4h2V401.6h2V393.2h1V401.6h1V397.4h4V401.6h2V397.4h8V401.6h3V397.4h4V401.6h1V389h1V401.6h2V397.4h2V401.6h2V393.2h1V401.6h1V397.4h2V401.6h3V397.4h7V401.6h1V397.4h7V401.6h1V397.4h9V401.6h4V397.4h5V401.6h1V397.4h3V401.6h2V393.2h1V384.8h1V397.4h1V401.6h1V397.4h2V401.6h3V393.2h5V397.4h2V401.6h2V393.2h1V397.4h1V393.2h1V397.4h2V393.2h2V401.6h1V397.4h1V393.2h1V397.4h4V393.2h1V401.6h1V393.2h1V401.6h1V393.2h1V401.6h2V384.8h1V410Z" fill="#0cc000"/>
<polyline points="191.5,324.5 192.5,318.5 193.5,326.5 194.5,325.5 195.5,316.5 196.5,321.5 197.5,326.5 198.5,327.5 199.5,320.5 200.5,319.5 201.5,316.5 202.5,326.5 203.5,321.5 204.5,317.5 205.5,320.5 206.5,315.5 207.5,324.5 208.5,328.5 209.5,321.5 210.5,327.5 211.5,321.5 212.5,323.5 213.5,324.5 214.5,320.5 215.5,321.5 216.5,323.5 217.5,329.5 218.5,318.5 219.5,319.5 220.5,321.5 221.5,324.5 222.5,312.5 223.5,323.5 224.5,330.5 225.5,317.5 226.5,325.5 227.5,319.5 228.5,317.5 229.5,327.5 230.5,323.5 231.5,315.5 232.5,326.5 233.5,321.5 234.5,325.5 235.5,322.5 236.5,321.5 237.5,317.5 238.5,330.5 239.5,320.5 240.5,328.5 241.5,322.5 242.5,324.5 243.5,317.5 244.5,330.5 245.5,314.5 246.5,321.5 247.5,328.5 248.5,324.5 249.5,321.5 250.5,327.5 251.5,322.5 252.5,319.5 253.5,320.5 254.5,325.5 255.5,324.5 256.5,318.5 257.5,329.5 258.5,322.5 259.5,322.5 260.5,322.5 261.5,330.5 262.5,322.5 263.5,324.5 264.5,318.5 265.5,328.5 266.5,323.5 267.5,320.5 268.5,322.5 269.5,327.5 270.5,321.5 271.5,326.5 272.5,321.5 273.5,325.5 274.5,327.5 275.5,321.5 276.5,319.5 277.5,324.5 278.5,323.5 279.5,325.5 280.5,319.5 281.5,324.5 282.5,321.5 283.5,326.5 284.5,322.5 285.5,327.5 286.5,321.5 287.5,332.5 288.5,318.5 289.5,327.5 290.5,321.5 291.5,312.5 292.5,327.5 293.5,311.5 294.5,321.5 295.5,323.5 296.5,312.5 297.5,329.5 298.5,321.5 299.5,317.5 300.5,320.5 301.5,325.5 302.5,323.5 303.5,331.5 304.5,319.5 305.5,321.5 306.5,323.5 307.5,317.5 308.5,325.5 309.5,312.5 310.5,317.5 311.5,326.5 312.5,324.5 313.5,318.5 314.5,321.5 315.5,322.5 316.5,322.5 317.5,324.5 318.5,319.5 319.5,318.5 320.5,323.5 321.5,317.5 322.5,314.5 323.5,316.5 324.5,321.5 325.5,314.5 326.5,311.5 327.5,317.5 328.5,313.5 329.5,323.5 330.5,315.5 331.5,310.5 332.5,317.5 333.5,315.5 334.5,318.5 335.5,317.5 336.5,315.5 337.5,312.5 338.5,326.5 339.5,315.5 340.5,315.5 341.5,315.5 342.5,324.5 343.5,316.5 344.5,314.5 345.5,317.5 346.5,310.5 347.5,324.5 348.5,316.5 349.5,322.5 350.5,313.5 351.5,312.5 352.5,306.5 353.5,314.5 354.5,313.5 355.5,309.5 356.5,313.5 357.5,311.5 358.5,312.5 359.5,310.5 360.5,317.5 361.5,321.5 362.5,314.5 363.5,309.5 364.5,319.5 365.5,307.5 366.5,321.5 367.5,312.5 368.5,318.5 369.5,307.5 370.5,307.5 371.5,318.5 372.5,302.5 373.5,324.5 374.5,307.5 375.5,323.5 376.5,315.5 377.5,304.5 378.5,321.5 379.5,312.5 380.5,306.5 381.5,312.5 382.5,317.5 383.5,309.5 384.5,315.5 385.5,308.5 386.5,313.5 387.5,319.5 388.5,311.5 389.5,305.5 390.5,318.5 391.5,306.5 392.5,309.5 393.5,304.5 394.5,311.5 395.5,306.5 396.5,304.5 397.5,303.5 398.5,315.5 399.5,314.5 400.5,312.5 401.5,316.5 402.5,310.5 403.5,310.5 404.5,316.5 405.5,315.5 406.5,320.5 407.5,322.5 408.5,319.5 409.5,311.5 410.5,311.5 411.5,324.5 412.5,312.5 413.5,310.5 414.5,314.5 415.5,306.5 416.5,320.5 417.5,308.5 418.5,313.5 419.5,312.5 420.5,304.5 421.5,315.5 422.5,312.5 423.5,310.5 424.5,323.5 425.5,315.5 426.5,322.5 427.5,307.5 428.5,311.5 429.5,323.5 430.5,312.5 431.5,313.5 432.5,324.5 433.5,309.5 434.5,317.5 435.5,317.5 436.5,315.5 437.5,319.5 438.5,310.5 439.5,311.5 440.5,317.5 441.5,318.5 442.5,317.5 443.5,305.5 444.5,325.5 445.5,310.5 446.5,326.5 447.5,317.5 448.5,311.5 449.5,320.5 450.5,309.5 451.5,308.5 452.5,317.5 453.5,309.5 454.5,317.5 455.5,311.5 456.5,317.5 457.5,314.5 458.5,314.5 459.5,311.5 460.5,320.5 461.5,317.5 462.5,308.5 463.5,317.5 464.5,316.5 465.5,317.5 466.5,318.5 467.5,314.5 468.5,313.5 469.5,332.5 470.5,316.5 471.5,316.5 472.5,321.5 473.5,311.5 474.5,321.5 475.5,318.5 476.5,324.5 477.5,322.5 478.5,317.5 479.5,314.5 480.5,319.5 481.5,314.5 482.5,316.5 483.5,324.5 484.5,316.5 485.5,319.5 486.5,311.5 487.5,329.5 488.5,324.5 489.5,320.5 490.5,319.5 491.5,318.5 492.5,321.5 493.5,320.5 494.5,329.5 495.5,316.5 496.5,316.5 497.5,319.5 498.5,320.5 499.5,324.5 500.5,320.5 501.5,310.5 502.5,327.5 503.5,320.5 504.5,329.5 505.5,322.5 506.5,319.5 507.5,330.5 508.5,316.5 509.5,325.5 510.5,319.5 511.5,327.5 512.5,317.5 513.5,328.5 514.5,320.5 515.5,324.5 516.5,327.5 517.5,316.5 518.5,329.5 519.5,323.5 520.5,317.5 521.5,326.5 522.5,328.5 523.5,323.5 524.5,319.5 525.5,323.5 526.5,329.5 527.5,327.5 528.5,325.5 529.5,323.5 530.5,324.5 531.5,326.5 532.5,327.5 533.5,323.5 534.5,329.5 535.5,324.5 536.5,329.5 537.5,324.5 538.5,323.5 539.5,327.5 540.5,325.5 541.5,327.5 542.5,319.5 543.5,332.5 544.5,327.5 545.5,329.5 546.5,327.5 547.5,327.5 548.5,334.5 549.5,331.5 550.5,330.5 551.5,323.5 552.5,324.5 553.5,331.5 554.5,326.5 555.5,339.5 556.5,326.5 557.5,331.5 558.5,337.5 559.5,321.5 560.5,324.5 561.5,335.5 562.5,329.5 563.5,329.5 564.5,330.5 565.5,336.5 566.5,327.5 567.5,331.5 568.5,333.5 569.5,332.5 570.5,336.5 571.5,326.5 572.5,342.5 573.5,322.5 574.5,329.5 575.5,331.5 576.5,331.5 577.5,338.5 578.5,334.5 579.5,328.5 580.5,328.5 581.5,336.5 582.5,334.5 583.5,326.5 584.5,321.5 585.5,329.5 586.5,336.5 587.5,331.5 588.5,331.5 589.5,330.5 590.5,327.5 591.5,330.5" fill="none" stroke="#dda0dd" stroke-width="1" shape-rendering="crispEdges"/>
<rect x="592" y="284" width="1.1" height="101" fill="#40ccf4"/>
<rect x="189" y="283" width="2" height="127" fill="#000"/>
<rect x="189" y="283" width="434" height="1.6" fill="#000"/>
<rect x="622" y="283" width="2" height="127" fill="#000"/>
<rect x="190" y="309" width="1" height="101" fill="#e8921a"/>
<text x="185.3" y="288.2" text-anchor="end" textLength="11.6" lengthAdjust="spacingAndGlyphs">30</text>
<rect x="185" y="284" width="5" height="1" fill="#000"/>
<text x="185.3" y="309.2" text-anchor="end" textLength="11.6" lengthAdjust="spacingAndGlyphs">25</text>
<rect x="185" y="305" width="5" height="1" fill="#000"/>
<text x="185.3" y="330.2" text-anchor="end" textLength="11.6" lengthAdjust="spacingAndGlyphs">20</text>
<rect x="185" y="326" width="5" height="1" fill="#000"/>
<text x="185.3" y="351.2" text-anchor="end" textLength="11.6" lengthAdjust="spacingAndGlyphs">15</text>
<rect x="185" y="347" width="5" height="1" fill="#000"/>
<text x="185.3" y="372.2" text-anchor="end" textLength="11.6" lengthAdjust="spacingAndGlyphs">10</text>
<rect x="185" y="368" width="5" height="1" fill="#000"/>
<text x="185.3" y="393.2" text-anchor="end" textLength="5.8" lengthAdjust="spacingAndGlyphs">5</text>
<rect x="185" y="389" width="5" height="1" fill="#000"/>
<text x="627.2" y="288.2" textLength="20.9" lengthAdjust="spacingAndGlyphs">20%</text>
<text x="627.2" y="313.4" textLength="20.9" lengthAdjust="spacingAndGlyphs">16%</text>
<text x="627.2" y="338.6" textLength="20.9" lengthAdjust="spacingAndGlyphs">12%</text>
<text x="627.2" y="363.8" textLength="15.1" lengthAdjust="spacingAndGlyphs">8%</text>
<text x="627.2" y="389" textLength="15.1" lengthAdjust="spacingAndGlyphs">4%</text>
<text x="189.3" y="420.2" text-anchor="middle" textLength="14.5" lengthAdjust="spacingAndGlyphs">0.0</text>
<text x="232.7" y="420.2" text-anchor="middle" textLength="14.5" lengthAdjust="spacingAndGlyphs">2.5</text>
<text x="275.7" y="420.2" text-anchor="middle" textLength="14.5" lengthAdjust="spacingAndGlyphs">5.0</text>
<text x="318.5" y="420.2" text-anchor="middle" textLength="14.5" lengthAdjust="spacingAndGlyphs">7.5</text>
<text x="362.1" y="420.2" text-anchor="middle" textLength="20.3" lengthAdjust="spacingAndGlyphs">10.0</text>
<text x="405.7" y="420.2" text-anchor="middle" textLength="20.3" lengthAdjust="spacingAndGlyphs">12.5</text>
<text x="448.9" y="420.2" text-anchor="middle" textLength="20.3" lengthAdjust="spacingAndGlyphs">15.0</text>
<text x="492.1" y="420.2" text-anchor="middle" textLength="20.3" lengthAdjust="spacingAndGlyphs">17.5</text>
<text x="534.6" y="420.2" text-anchor="middle" textLength="20.3" lengthAdjust="spacingAndGlyphs">20.0</text>
<text x="577.4" y="420.2" text-anchor="middle" textLength="20.3" lengthAdjust="spacingAndGlyphs">22.5</text>
<text x="602.1" y="420.2" textLength="38.3" lengthAdjust="spacingAndGlyphs">25.0 GB</text>
<rect x="191" y="273" width="6" height="8" fill="#008000"/><text x="200" y="280.7" textLength="16.3" lengthAdjust="spacingAndGlyphs">BIS</text>
<rect x="219" y="273" width="6" height="8" fill="#d8a0d8"/><text x="227.7" y="280.7" textLength="23.3" lengthAdjust="spacingAndGlyphs">Jitter</text>
<rect x="254" y="270" width="6" height="3" fill="#000"/>
</svg>
<span class="t" style="left:191.3px;top:96.7px;font-size:13.4px;line-height:13.4px;transform:scaleX(1.080);font-weight:bold;color:#fff">Disc quality</span>
<span class="t" style="left:252.2px;top:430.6px;font-size:11.4px;line-height:11.4px;transform:scaleX(0.904)">LDC</span>
<span class="t" style="left:310.8px;top:430.6px;font-size:11.4px;line-height:11.4px;transform:scaleX(0.838)">BIS</span>
<span class="t" style="left:162.5px;top:447.6px;font-size:11.4px;line-height:11.4px;transform:scaleX(1.004)">Avg</span>
<span class="t" style="left:162.5px;top:463.9px;font-size:11.4px;line-height:11.4px;transform:scaleX(1.012)">Max</span>
<span class="t" style="left:160.5px;top:479.7px;font-size:11.4px;line-height:11.4px;transform:scaleX(1.051)">Total</span>
<span class="t" style="left:252.2px;top:447.6px;font-size:11.4px;line-height:11.4px;transform:scaleX(0.929);color:#0404f8">8.27</span>
<span class="t" style="left:255.9px;top:463.9px;font-size:11.4px;line-height:11.4px;transform:scaleX(0.889);color:#0404f8">312</span>
<span class="t" style="left:230.2px;top:479.7px;font-size:11.4px;line-height:11.4px;transform:scaleX(0.960);color:#0404f8">3158673</span>
<span class="t" style="left:305.9px;top:447.6px;font-size:11.4px;line-height:11.4px;transform:scaleX(0.965);color:#0404f8">0.17</span>
<span class="t" style="left:314.5px;top:463.9px;font-size:11.4px;line-height:11.4px;transform:scaleX(1.010);color:#0404f8">24</span>
<span class="t" style="left:296.5px;top:479.7px;font-size:11.4px;line-height:11.4px;transform:scaleX(0.972);color:#0404f8">63949</span>
<div class="a" style="left:395px;top:430px;width:13px;height:13px;background:#f6f6ff;border:1px solid #333"></div>
<svg class="a" style="left:395px;top:430px" width="13" height="13" viewBox="0 0 13 13"><path d="M2.8 6.6l2.6 2.7 5-5.8" fill="none" stroke="#222" stroke-width="1.1"/></svg>
<span class="t" style="left:417.3px;top:431.8px;font-size:11.4px;line-height:11.4px;transform:scaleX(1.013)">Jitter</span>
<span class="t" style="left:411.5px;top:447.7px;font-size:11.4px;line-height:11.4px;transform:scaleX(0.947);color:#0404f8">14.2%</span>
<span class="t" style="left:411.5px;top:463.9px;font-size:11.4px;line-height:11.4px;transform:scaleX(0.947);color:#0404f8">17.8%</span>
<span class="t" style="left:460.8px;top:435.7px;font-size:11.4px;line-height:11.4px;transform:scaleX(0.975)">Speed</span>
<span class="t" style="left:519.5px;top:435.7px;font-size:11.4px;line-height:11.4px;transform:scaleX(0.956);color:#0404f8">4.19 X</span>
<span class="t" style="left:460.8px;top:463.9px;font-size:11.4px;line-height:11.4px;transform:scaleX(1.036)">Position</span>
<span class="t" style="left:519.5px;top:463.9px;font-size:11.4px;line-height:11.4px;transform:scaleX(0.972);color:#0404f8">23862 MB</span>
<span class="t" style="left:460.8px;top:479.9px;font-size:11.4px;line-height:11.4px;transform:scaleX(0.947)">Samples</span>
<span class="t" style="left:519.5px;top:479.9px;font-size:11.4px;line-height:11.4px;transform:scaleX(0.979);color:#0404f8">379312</span>
<div class="tb" style="left:575px;top:428px;width:75px;height:21px"></div>
<span class="t" style="left:578.5px;top:433.9px;font-size:11.4px;line-height:11.4px;transform:scaleX(0.940)">4.0 X</span>
<svg class="a" style="left:636.5px;top:436.5px" width="10" height="7" viewBox="0 0 10 7"><path d="M0.9 0.8l3.8 3.9L8.5 0.8" fill="none" stroke="#404040" stroke-width="1.1"/></svg>
<div class="tb" style="left:576px;top:452px;width:73px;height:21px"></div>
<span class="t" style="left:589.9px;top:457.9px;font-size:11.4px;line-height:11.4px;transform:scaleX(1.067)">Start full</span>
<div class="tb" style="left:575px;top:479px;width:73px;height:21px"></div>
<span class="t" style="left:587.2px;top:484.9px;font-size:11.4px;line-height:11.4px;transform:scaleX(1.026)">Start part</span>
</body></html>
